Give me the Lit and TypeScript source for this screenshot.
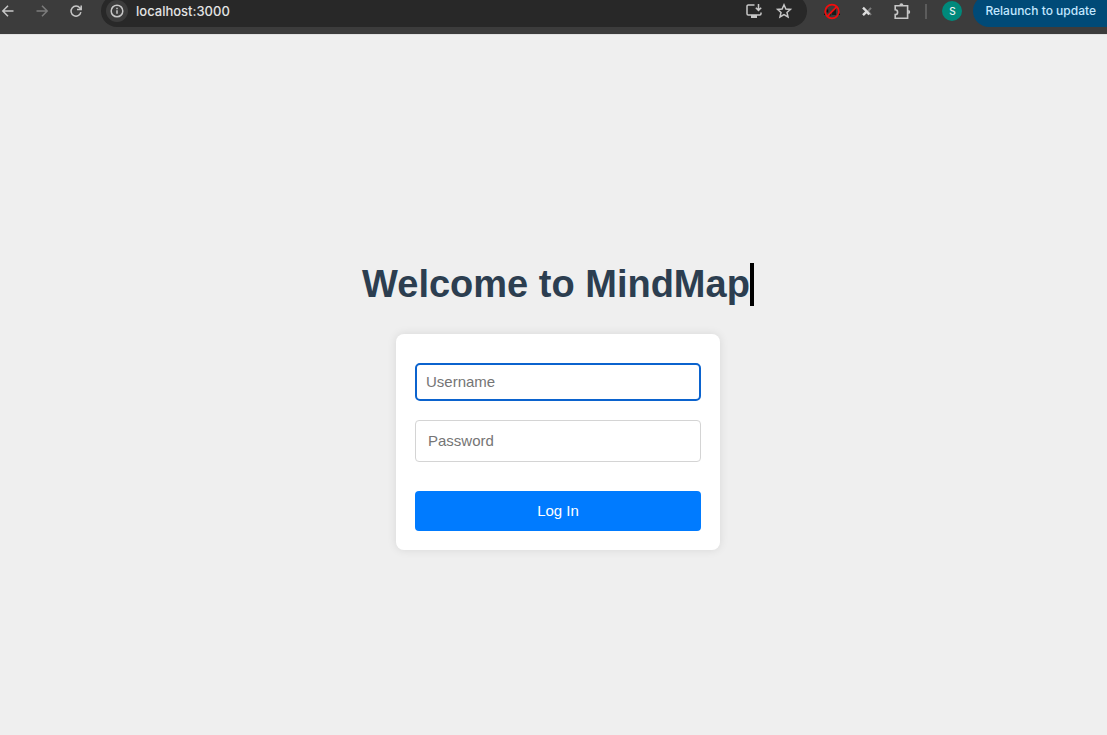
import { LitElement, html, css } from "lit";
import { customElement } from "lit/decorators.js";

@customElement("browser-toolbar")
export class BrowserToolbar extends LitElement {
  static styles = css`
    :host {
      display: block;
      overflow: hidden;
      background: #3c3c3c;
      font: 500 13px/20px Inter, Roboto, sans-serif;
      border-bottom: 1px solid #e2e2e2;
      flex: none;
    }
    .bar {
      display: flex;
      align-items: center;
      margin-top: -5px;
      padding-bottom: 7px;
    }
    button {
      font: inherit;
      color: inherit;
      border: 0;
      padding: 0;
      background: none;
      display: flex;
      align-items: center;
      justify-content: center;
    }
    svg {
      display: block;
      fill: none;
      stroke: currentColor;
      stroke-width: 1.5;
    }
    .nav {
      display: flex;
      gap: 18px;
      color: #c7c7c7;
    }
    .muted {
      color: #7c7c7c;
    }
    .address {
      flex: 1;
      min-width: 0;
      display: flex;
      align-items: center;
      height: 32px;
      margin: 0 15px 0 17px;
      padding: 0 13px 0 5px;
      box-sizing: border-box;
      border-radius: 16px;
      background: #282828;
      color: #c7c7c7;
      gap: 10px;
    }
    .info {
      width: 22px;
      height: 22px;
      border-radius: 50%;
      background: #3c3c3c;
      flex: none;
    }
    .url {
      flex: 1;
      min-width: 0;
      margin-left: -2px;
      border: 0;
      padding: 0;
      background: none;
      font: inherit;
      color: #e3e3e3;
      outline: 0;
    }
    .extensions {
      display: flex;
      align-items: center;
      gap: 15px;
      color: #c7c7c7;
    }
    .divider {
      width: 2px;
      height: 15px;
      margin: 0 15px 0 13px;
      background: #5c5c5c;
    }
    .avatar {
      width: 20px;
      height: 20px;
      border-radius: 50%;
      background: #00897b;
      color: #e8f5f3;
      font-size: 10px;
    }
    .update {
      height: 32px;
      margin-left: 11px;
      padding: 0 11px 0 12px;
      border-radius: 16px 0 0 16px;
      background: #004a77;
      color: #c2e7ff;
      font-size: 12px;
      white-space: nowrap;
    }
  `;

  render() {
    return html`
      <div class="bar">
        <div class="nav">
          <button aria-label="Back">
            <svg width="16" height="16" viewBox="0 0 16 16"><path d="M13.5 8H2.8M8 2.8 2.8 8 8 13.2" /></svg>
          </button>
          <button class="muted" aria-label="Forward">
            <svg width="16" height="16" viewBox="0 0 16 16"><path d="M2.5 8h10.7M8 2.8 13.2 8 8 13.2" /></svg>
          </button>
          <button aria-label="Reload">
            <svg width="16" height="16" viewBox="0 0 16 16"><path d="M12.9 9.2A5 5 0 1 1 12 5.1L13 6.4M13.2 2.4v4.2H9" /></svg>
          </button>
        </div>
        <div class="address">
          <button class="info" aria-label="Site information">
            <svg width="16" height="16" viewBox="0 0 16 16"><circle cx="8" cy="8" r="5.8" /><path d="M8 7.2v3.6M8 4.8v1.5" /></svg>
          </button>
          <input class="url" aria-label="Address" value="localhost:3000" />
          <button aria-label="Install app">
            <svg width="20" height="20" viewBox="0 0 20 20">
              <path d="M10.5 4H4.2a1.2 1.2 0 0 0-1.2 1.2v7.6A1.2 1.2 0 0 0 4.2 14h11.6a1.2 1.2 0 0 0 1.2-1.2V11.5M14.5 3v6M11.8 6.7l2.7 2.7 2.7-2.7" />
              <path d="M7 14h6v3H7z" fill="currentColor" stroke="none" />
            </svg>
          </button>
          <button aria-label="Bookmark this page">
            <svg width="20" height="20" viewBox="0 0 20 20">
              <path stroke-width="1.5" d="m10 3.8 1.9 4.2 4.5.4-3.4 3 1 4.5-4-2.4-4 2.4 1-4.5-3.4-3 4.5-.4z" />
            </svg>
          </button>
        </div>
        <div class="extensions">
          <button aria-label="Blocker extension">
            <svg width="20" height="20" viewBox="0 0 20 20">
              <path stroke="#111" stroke-width="1.6" d="M2 13.2h2M5.5 8.5v3M8.5 12v2.5M11 9v5M13 7v7M16 13.2h2" />
              <circle cx="10" cy="10.5" r="6.8" stroke="#f20d0d" stroke-width="1.8" />
              <path stroke="#f20d0d" stroke-width="1.8" d="m5.2 15.3 9.6-9.6" />
            </svg>
          </button>
          <button aria-label="Tools extension">
            <svg width="20" height="20" viewBox="0 0 20 20">
              <path stroke="#7c7c7c" stroke-width="2" d="m14 6.8-3 3.4 3 3.8" />
              <path stroke="#ddd" stroke-width="2.4" d="m6 6.6 3.8 3.8L6 14.2M9.8 10.4l2.4 3" />
            </svg>
          </button>
          <button aria-label="Extensions">
            <svg width="20" height="20" viewBox="0 0 20 20">
              <path stroke-width="1.6" d="M3.2 4.8h12.4v12.4H3.2v-3.6a2.2 2.2 0 0 0 0-4.8z" />
              <path d="M7.4 4.2a2 2 0 0 1 4 0zM16.2 8.9a2 2 0 0 1 0 4z" fill="currentColor" stroke="none" />
            </svg>
          </button>
        </div>
        <div class="divider"></div>
        <button class="avatar" aria-label="Profile">S</button>
        <button class="update">Relaunch to update</button>
      </div>
    `;
  }
}

@customElement("login-form")
export class LoginForm extends LitElement {
  static styles = css`
    :host {
      display: block;
    }
    form {
      display: flex;
      flex-direction: column;
      box-sizing: border-box;
      width: 324px;
      padding: 29px 19px 19px;
      border-radius: 8px;
      background: #fff;
      box-shadow: 0 0 10px rgba(0, 0, 0, 0.1);
    }
    input,
    button {
      box-sizing: border-box;
      width: 100%;
      border-radius: 4px;
      font: 15px/20px "Liberation Sans", Arial, sans-serif;
    }
    input {
      height: 42px;
      margin: 0 0 19px;
      padding: 0 12px 2px;
      border: 1px solid #d4d4d4;
      background: #fff;
      outline: 0;
    }
    input::placeholder {
      color: #757575;
    }
    .active {
      height: 38px;
      padding: 0 9px 2px;
      border: 2px solid #0b63ce;
      border-radius: 5px;
    }
    button {
      height: 40px;
      margin-top: 10px;
      border: 0;
      background: #007bff;
      color: #fff;
    }
  `;

  render() {
    return html`
      <form @submit=${(e: Event) => e.preventDefault()}>
        <input class="active" type="text" placeholder="Username" aria-label="Username" />
        <input type="password" placeholder="Password" aria-label="Password" />
        <button type="submit">Log In</button>
      </form>
    `;
  }
}

@customElement("app-root")
export class AppRoot extends LitElement {
  static styles = css`
    :host {
      display: flex;
      flex-direction: column;
      min-height: 100vh;
      background: #efefef;
      font-family: "Liberation Sans", Arial, sans-serif;
    }
    main {
      flex: 1;
      display: flex;
      flex-direction: column;
      align-items: center;
      justify-content: center;
      padding: 43px 0 0 9px;
    }
    h1 {
      margin: 0 0 28px;
      border-right: 4px solid #000;
      color: #2c3e50;
      font-size: 38px;
      line-height: 43px;
      white-space: nowrap;
    }
  `;

  render() {
    return html`
      <browser-toolbar></browser-toolbar>
      <main>
        <h1>Welcome to MindMap</h1>
        <login-form></login-form>
      </main>
    `;
  }
}
